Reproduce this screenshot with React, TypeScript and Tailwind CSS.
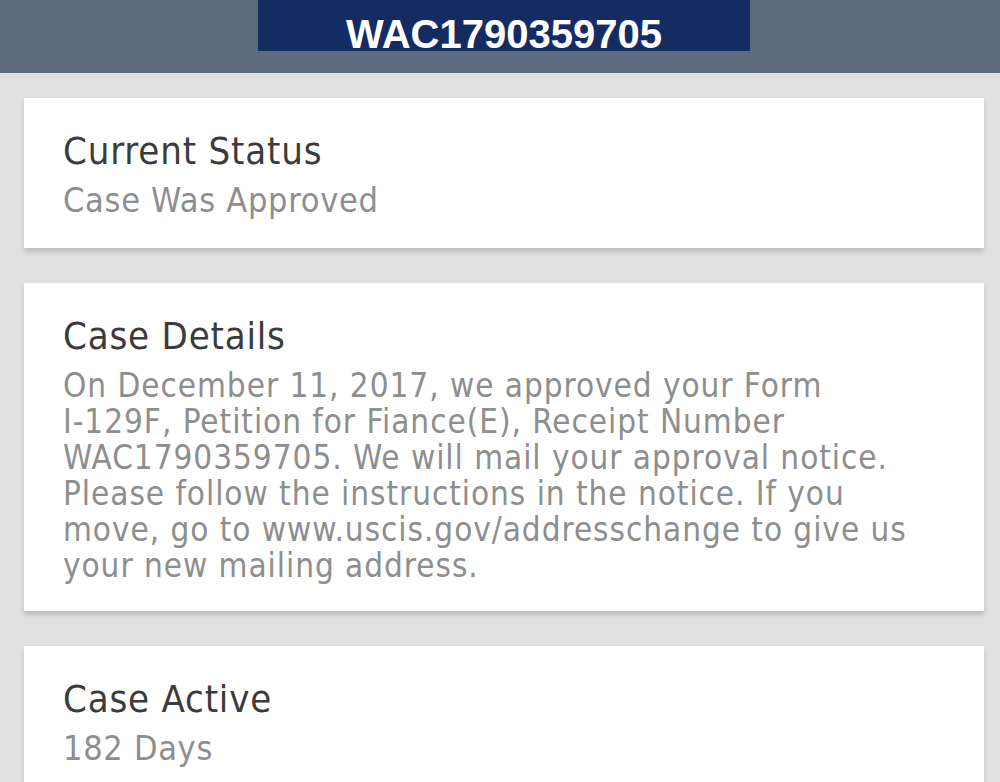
const bodyLines = [
  "On December 11, 2017, we approved your Form",
  "I-129F, Petition for Fiance(E), Receipt Number",
  "WAC1790359705. We will mail your approval notice.",
  "Please follow the instructions in the notice. If you",
  "move, go to www.uscis.gov/addresschange to give us",
  "your new mailing address.",
];

function Card({ title, children }: { title: string; children: React.ReactNode }) {
  return (
    <section className="bg-white pl-[39px] pr-[30px] pt-[31px] shadow-[0_4px_5px_rgba(0,0,0,0.16)]">
      <h2 className="text-[38px] leading-[44px] tracking-[0.8px] text-[#3b3b3b] whitespace-nowrap">{title}</h2>
      {children}
    </section>
  );
}

export default function App() {
  return (
    <div
      className="min-h-screen bg-[#e1e1e1] overflow-hidden"
      style={{ fontFamily: '"DejaVu Sans Condensed", "DejaVu Sans", sans-serif' }}
    >
      {/* Receipt number bar */}
      <header className="h-[73px] bg-[#5c6b7e] flex justify-center">
        <div className="ml-[8px] w-[492px] h-[51px] bg-[#152c63] flex justify-center pt-[16px]">
          <span className="text-white font-bold text-[40px] leading-[36px] font-['Liberation_Sans',Arial,sans-serif]">
            WAC1790359705
          </span>
        </div>
      </header>

      <main className="flex flex-col gap-[35px] pl-[24px] pr-[16px] pt-[25px] pb-[40px]">
        <Card title="Current Status">
          <p className="mt-[5px] pb-[26px] text-[34px] leading-[44px] tracking-[0.7px] text-[#8e8e8e] whitespace-nowrap">
            Case Was Approved
          </p>
        </Card>

        <Card title="Case Details">
          <p className="mt-[10px] pb-[27px] text-[33px] leading-[36px] tracking-[0.95px] text-[#8e8e8e] whitespace-nowrap">
            {bodyLines.map((line, i) => (
              <span key={i} className="block">{line}</span>
            ))}
          </p>
        </Card>

        <Card title="Case Active">
          <p className="mt-[5px] pb-[26px] text-[34px] leading-[44px] tracking-[0.7px] text-[#8e8e8e] whitespace-nowrap">
            182 Days
          </p>
        </Card>
      </main>
    </div>
  );
}
